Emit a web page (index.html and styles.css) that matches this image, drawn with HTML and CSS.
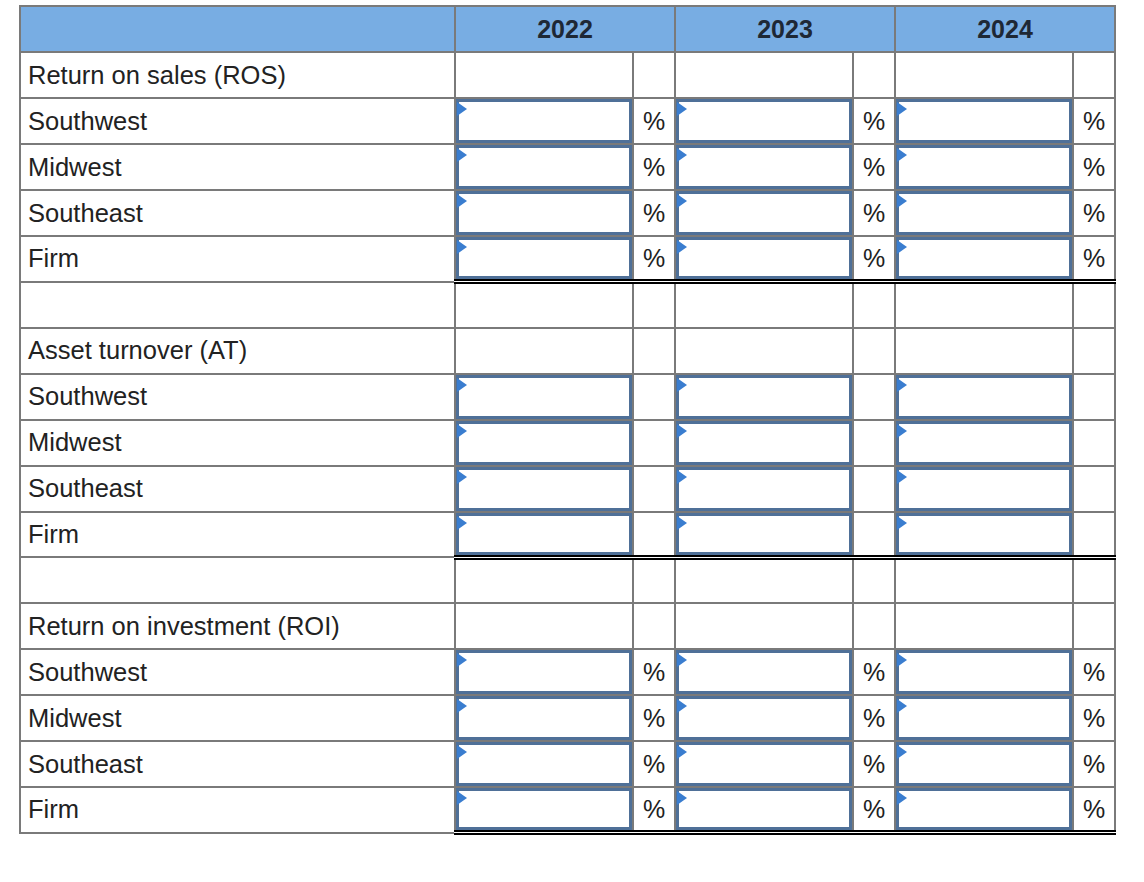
FILE: index.html
```html
<!DOCTYPE html>
<html>
<head>
<meta charset="utf-8">
<link rel="stylesheet" href="styles.css">
</head>
<body>
<table class="grid">
  <colgroup>
    <col class="c-label">
    <col class="c-in"><col class="c-pct">
    <col class="c-in"><col class="c-pct">
    <col class="c-in"><col class="c-pct">
  </colgroup>
  <thead>
    <tr class="head">
      <th></th>
      <th colspan="2">2022</th>
      <th colspan="2">2023</th>
      <th colspan="2">2024</th>
    </tr>
  </thead>
  <tbody>
    <tr><td class="label">Return on sales (ROS)</td><td></td><td></td><td></td><td></td><td></td><td></td></tr>
    <tr><td class="label">Southwest</td><td class="in"><div class="box"></div></td><td class="pct">%</td><td class="in"><div class="box"></div></td><td class="pct">%</td><td class="in"><div class="box"></div></td><td class="pct">%</td></tr>
    <tr><td class="label">Midwest</td><td class="in"><div class="box"></div></td><td class="pct">%</td><td class="in"><div class="box"></div></td><td class="pct">%</td><td class="in"><div class="box"></div></td><td class="pct">%</td></tr>
    <tr><td class="label">Southeast</td><td class="in"><div class="box"></div></td><td class="pct">%</td><td class="in"><div class="box"></div></td><td class="pct">%</td><td class="in"><div class="box"></div></td><td class="pct">%</td></tr>
    <tr class="total"><td class="label">Firm</td><td class="in"><div class="box"></div></td><td class="pct">%</td><td class="in"><div class="box"></div></td><td class="pct">%</td><td class="in"><div class="box"></div></td><td class="pct">%</td></tr>
    <tr><td class="label"></td><td></td><td></td><td></td><td></td><td></td><td></td></tr>

    <tr><td class="label">Asset turnover (AT)</td><td></td><td></td><td></td><td></td><td></td><td></td></tr>
    <tr><td class="label">Southwest</td><td class="in"><div class="box"></div></td><td class="pct"></td><td class="in"><div class="box"></div></td><td class="pct"></td><td class="in"><div class="box"></div></td><td class="pct"></td></tr>
    <tr><td class="label">Midwest</td><td class="in"><div class="box"></div></td><td class="pct"></td><td class="in"><div class="box"></div></td><td class="pct"></td><td class="in"><div class="box"></div></td><td class="pct"></td></tr>
    <tr><td class="label">Southeast</td><td class="in"><div class="box"></div></td><td class="pct"></td><td class="in"><div class="box"></div></td><td class="pct"></td><td class="in"><div class="box"></div></td><td class="pct"></td></tr>
    <tr class="total"><td class="label">Firm</td><td class="in"><div class="box"></div></td><td class="pct"></td><td class="in"><div class="box"></div></td><td class="pct"></td><td class="in"><div class="box"></div></td><td class="pct"></td></tr>
    <tr><td class="label"></td><td></td><td></td><td></td><td></td><td></td><td></td></tr>

    <tr><td class="label">Return on investment (ROI)</td><td></td><td></td><td></td><td></td><td></td><td></td></tr>
    <tr><td class="label">Southwest</td><td class="in"><div class="box"></div></td><td class="pct">%</td><td class="in"><div class="box"></div></td><td class="pct">%</td><td class="in"><div class="box"></div></td><td class="pct">%</td></tr>
    <tr><td class="label">Midwest</td><td class="in"><div class="box"></div></td><td class="pct">%</td><td class="in"><div class="box"></div></td><td class="pct">%</td><td class="in"><div class="box"></div></td><td class="pct">%</td></tr>
    <tr><td class="label">Southeast</td><td class="in"><div class="box"></div></td><td class="pct">%</td><td class="in"><div class="box"></div></td><td class="pct">%</td><td class="in"><div class="box"></div></td><td class="pct">%</td></tr>
    <tr class="total"><td class="label">Firm</td><td class="in"><div class="box"></div></td><td class="pct">%</td><td class="in"><div class="box"></div></td><td class="pct">%</td><td class="in"><div class="box"></div></td><td class="pct">%</td></tr>
  </tbody>
</table>
</body>
</html>
```

FILE: styles.css
```css
html, body {
  margin: 0;
  padding: 0;
  background: #ffffff;
}
body {
  padding: 5px 0 0 19px;
  font-family: "Liberation Sans", Arial, sans-serif;
  color: #222222;
}
.grid {
  border-collapse: collapse;
  table-layout: fixed;
  width: 1095px;
}
.c-label { width: 435px; }
.c-in { width: 178px; }
.c-pct { width: 42px; }

.grid th,
.grid td {
  border: 2px solid #7a7a7a;
  height: 46px;
  padding: 0;
  box-sizing: border-box;
}
.grid .head th {
  background: #78ade3;
  font-size: 25px;
  font-weight: bold;
  color: #1e2835;
  text-align: center;
  vertical-align: middle;
}
.grid td.label {
  font-size: 25.5px;
  padding-left: 7px;
  vertical-align: middle;
  white-space: nowrap;
}
.grid td.pct {
  font-size: 25px;
  text-align: center;
  vertical-align: middle;
}
.grid td.in {
  padding: 0;
  vertical-align: middle;
}
.box {
  position: relative;
  height: 44px;
  border: 3px solid #4f7098;
  box-sizing: border-box;
  background: #ffffff;
}
.box::before {
  content: "";
  position: absolute;
  left: -2px;
  top: 0;
  width: 0;
  height: 0;
  border-top: 7px solid transparent;
  border-bottom: 7px solid transparent;
  border-left: 10px solid #3a7dcf;
}
.grid .total td {
  height: 44px;
}
.grid .total .box {
  height: 42px;
}
.grid .total td.in,
.grid .total td.pct {
  border-top: 2px solid #000000;
  border-bottom: 5px double #000000;
}
```
